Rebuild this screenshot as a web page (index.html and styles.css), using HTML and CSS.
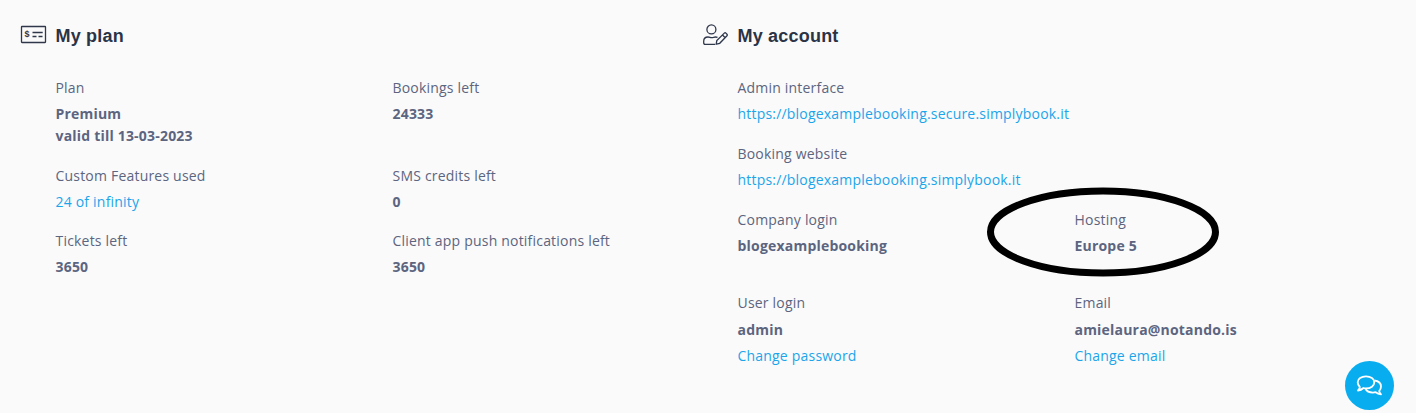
FILE: index.html
```html
<!DOCTYPE html>
<html lang="en">
<head>
  <meta charset="UTF-8">
  <meta name="viewport" content="width=device-width, initial-scale=1.0">
  <title>My plan and account</title>
  <link rel="stylesheet" href="styles.css">
</head>
<body>

  <div class="dashboard">
    <!-- My plan -->
    <section class="panel">
      <svg class="panel-icon" width="27" height="24" viewBox="0 0 27 24">
        <rect x="1.5" y="3.5" width="24" height="16" rx="0.5"/>
        <path d="M12.500 9.500H22.700M12.500 13.500h4M18.500 13.500h4"/>
        <text class="dollar" x="4.6" y="14.4">$</text>
      </svg>
      <div class="panel-body">
        <h2>My plan</h2>
        <div class="info-grid">
          <div class="info">
            <p class="label">Plan</p>
            <p class="value">Premium<br>valid till 13-03-2023</p>
          </div>
          <div class="info">
            <p class="label">Bookings left</p>
            <p class="value">24333</p>
          </div>
          <div class="info short">
            <p class="label">Custom Features used</p>
            <a class="link" href="#">24 of infinity</a>
          </div>
          <div class="info short">
            <p class="label">SMS credits left</p>
            <p class="value">0</p>
          </div>
          <div class="info">
            <p class="label">Tickets left</p>
            <p class="value">3650</p>
          </div>
          <div class="info">
            <p class="label">Client app push notifications left</p>
            <p class="value">3650</p>
          </div>
        </div>
      </div>
    </section>

    <!-- My account -->
    <section class="panel">
      <svg class="panel-icon" width="27" height="24" viewBox="0 0 27 24">
        <circle cx="9.4" cy="6.4" r="4.5"/>
        <path d="M13 21.300H3.200Q1.700 21.300 1.700 19.800V18.300Q1.700 14 6 14Q7 14 8 14.400Q9.500 15 11.500 14.400Q13.500 13.600 15.500 14.400"/>
        <path d="M14.200 21.200L14.800 17.600L22.300 10.100Q23.100 9.300 23.900 10.100L25 11.200Q25.800 12 25 12.800L17.700 20.300ZM20.500 12L23.200 14.700"/>
      </svg>
      <div class="panel-body">
        <h2>My account</h2>
        <div class="info-grid">
          <div class="info wide">
            <p class="label">Admin interface</p>
            <a class="link" href="#">https://blogexamplebooking.secure.simplybook.it</a>
          </div>
          <div class="info wide">
            <p class="label">Booking website</p>
            <a class="link" href="#">https://blogexamplebooking.simplybook.it</a>
          </div>
          <div class="info tall">
            <p class="label">Company login</p>
            <p class="value">blogexamplebooking</p>
          </div>
          <div class="info tall hosting">
            <p class="label">Hosting</p>
            <p class="value">Europe 5</p>
            <svg class="highlight" width="234" height="92" viewBox="0 0 234 92">
              <ellipse cx="117" cy="46" rx="112.500" ry="41"/>
            </svg>
          </div>
          <div class="info login">
            <p class="label">User login</p>
            <p class="value">admin</p>
            <a class="link" href="#">Change password</a>
          </div>
          <div class="info login">
            <p class="label">Email</p>
            <p class="value">amielaura@notando.is</p>
            <a class="link" href="#">Change email</a>
          </div>
        </div>
      </div>
    </section>
  </div>

  <!-- Chat button -->
  <button class="chat-button" aria-label="Chat">
    <svg width="27" height="24" viewBox="0 0 27 24">
      <path d="M2 16.500Q4 14.500 3.800 13Q1.700 11 1.700 8.300C1.700 4.800 5.200 2.300 10 2.300S18.300 4.800 18.300 8.300S14.800 14.400 10 14.400Q8.600 14.400 7.500 14Q5 16.300 2 16.500Z"/>
      <path d="M18.300 6.500C22.200 7 25 9.300 25 12.500Q25 15 23.200 17Q23.300 18.500 25 20.300Q21.800 20.200 19.600 18.200Q18.300 18.600 17 18.600C13.500 18.600 10.500 17 9.300 14.500"/>
    </svg>
  </button>

</body>
</html>
```

FILE: styles.css
```css
* {
  box-sizing: border-box;
}
body {
  margin: 0;
  height: 413px;
  overflow: hidden;
  background-color: #fafafa;
  color: #5c6580;
  font-family: "Open Sans", "Noto Sans", sans-serif;
  font-size: 14px;
  line-height: 22px;
  letter-spacing: 0.2px;
}
h2, p {
  margin: 0;
}
.dashboard {
  display: grid;
  grid-template-columns: 682px 1fr;
  padding: 23px 0 0 20px;
}
.panel {
  display: flex;
  gap: 8.5px;
}
.panel-icon {
  flex: none;
  fill: none;
  stroke: #2f374b;
  stroke-width: 1.3;
}
.dollar {
  fill: #2f374b;
  stroke: none;
  font: bold 9px "Liberation Sans", Arial, sans-serif;
}
.panel-body {
  flex: 1;
}
h2 {
  margin-bottom: 29px;
  padding-top: 1px;
  color: #2b3346;
  font-family: "Liberation Sans", Arial, sans-serif;
  font-size: 18px;
  font-weight: bold;
  line-height: 24px;
}
.info-grid {
  display: grid;
  grid-template-columns: 337px 1fr;
}
.info {
  padding-bottom: 18px;
}
.info.short {
  padding-bottom: 17px;
}
.info.tall {
  padding-bottom: 35px;
}
.wide {
  grid-column: 1 / 3;
}
.label {
  margin-bottom: 4px;
}
.value {
  font-weight: bold;
}
.login .value {
  margin: 5px 0 4px;
}
.link {
  display: block;
  color: #1ba5ea;
  text-decoration: none;
}
.hosting {
  position: relative;
}
/* ring drawn over the hosting details */
.highlight {
  position: absolute;
  left: -88.5px;
  top: -23px;
  fill: none;
  stroke: #000;
  stroke-width: 7;
}
.chat-button {
  position: absolute;
  right: 22px;
  bottom: 3px;
  display: flex;
  align-items: center;
  justify-content: center;
  width: 49px;
  height: 49px;
  padding: 0;
  border: none;
  border-radius: 50%;
  background-color: #08adef;
  cursor: pointer;
}
.chat-button svg {
  fill: none;
  stroke: #fff;
  stroke-width: 1.8;
  stroke-linejoin: round;
}
```
